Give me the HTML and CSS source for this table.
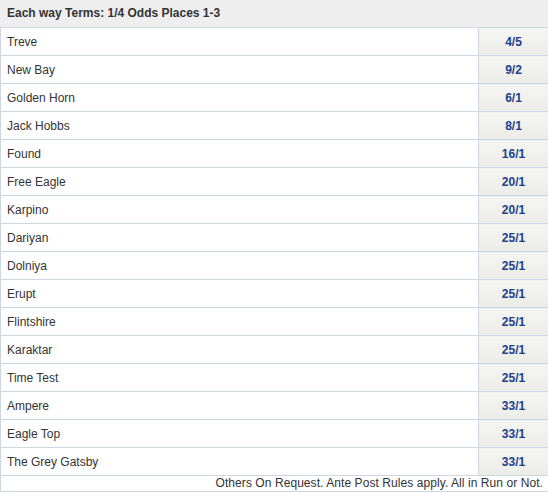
FILE: index.html
```html
<!DOCTYPE html>
<html>
<head>
<meta charset="utf-8">
<link rel="stylesheet" href="styles.css">
</head>
<body>
<div class="market">
  <div class="terms">Each way Terms: 1/4 Odds Places 1-3</div>
  <table class="runners">
    <tr><td class="name">Treve</td><td class="odds">4/5</td></tr>
    <tr><td class="name">New Bay</td><td class="odds">9/2</td></tr>
    <tr><td class="name">Golden Horn</td><td class="odds">6/1</td></tr>
    <tr><td class="name">Jack Hobbs</td><td class="odds">8/1</td></tr>
    <tr><td class="name">Found</td><td class="odds">16/1</td></tr>
    <tr><td class="name">Free Eagle</td><td class="odds">20/1</td></tr>
    <tr><td class="name">Karpino</td><td class="odds">20/1</td></tr>
    <tr><td class="name">Dariyan</td><td class="odds">25/1</td></tr>
    <tr><td class="name">Dolniya</td><td class="odds">25/1</td></tr>
    <tr><td class="name">Erupt</td><td class="odds">25/1</td></tr>
    <tr><td class="name">Flintshire</td><td class="odds">25/1</td></tr>
    <tr><td class="name">Karaktar</td><td class="odds">25/1</td></tr>
    <tr><td class="name">Time Test</td><td class="odds">25/1</td></tr>
    <tr><td class="name">Ampere</td><td class="odds">33/1</td></tr>
    <tr><td class="name">Eagle Top</td><td class="odds">33/1</td></tr>
    <tr><td class="name">The Grey Gatsby</td><td class="odds">33/1</td></tr>
  </table>
  <div class="note">Others On Request. Ante Post Rules apply. All in Run or Not.</div>
</div>
</body>
</html>
```
FILE: styles.css
```css
html, body {
  margin: 0;
  padding: 0;
  background: #fff;
}
.market {
  width: 548px;
  font-family: "Liberation Sans", Arial, sans-serif;
  font-size: 12px;
  color: #333;
}
.terms {
  height: 27px;
  line-height: 27px;
  padding-left: 7px;
  background: #eeeeee;
  font-weight: bold;
  border-bottom: 1px solid #cdd6e3;
}
.runners {
  width: 548px;
  border-collapse: collapse;
  border-left: 1px solid #cdd6e3;
}
.runners td {
  height: 27px;
  padding: 0;
  border-bottom: 1px solid #cdd6e3;
}
.name {
  padding-left: 6px !important;
}
.odds {
  width: 69px;
  text-align: center;
  font-weight: bold;
  color: #1c3f8c;
  border-left: 1px solid #cdd6e3;
  background: linear-gradient(#f5f5f3, #ebebe7);
}
.note {
  height: 15px;
  line-height: 15px;
  text-align: right;
  padding-right: 5px;
  letter-spacing: 0.07px;
  border-left: 1px solid #cdd6e3;
  border-bottom: 1px solid #cdd6e3;
}
```
